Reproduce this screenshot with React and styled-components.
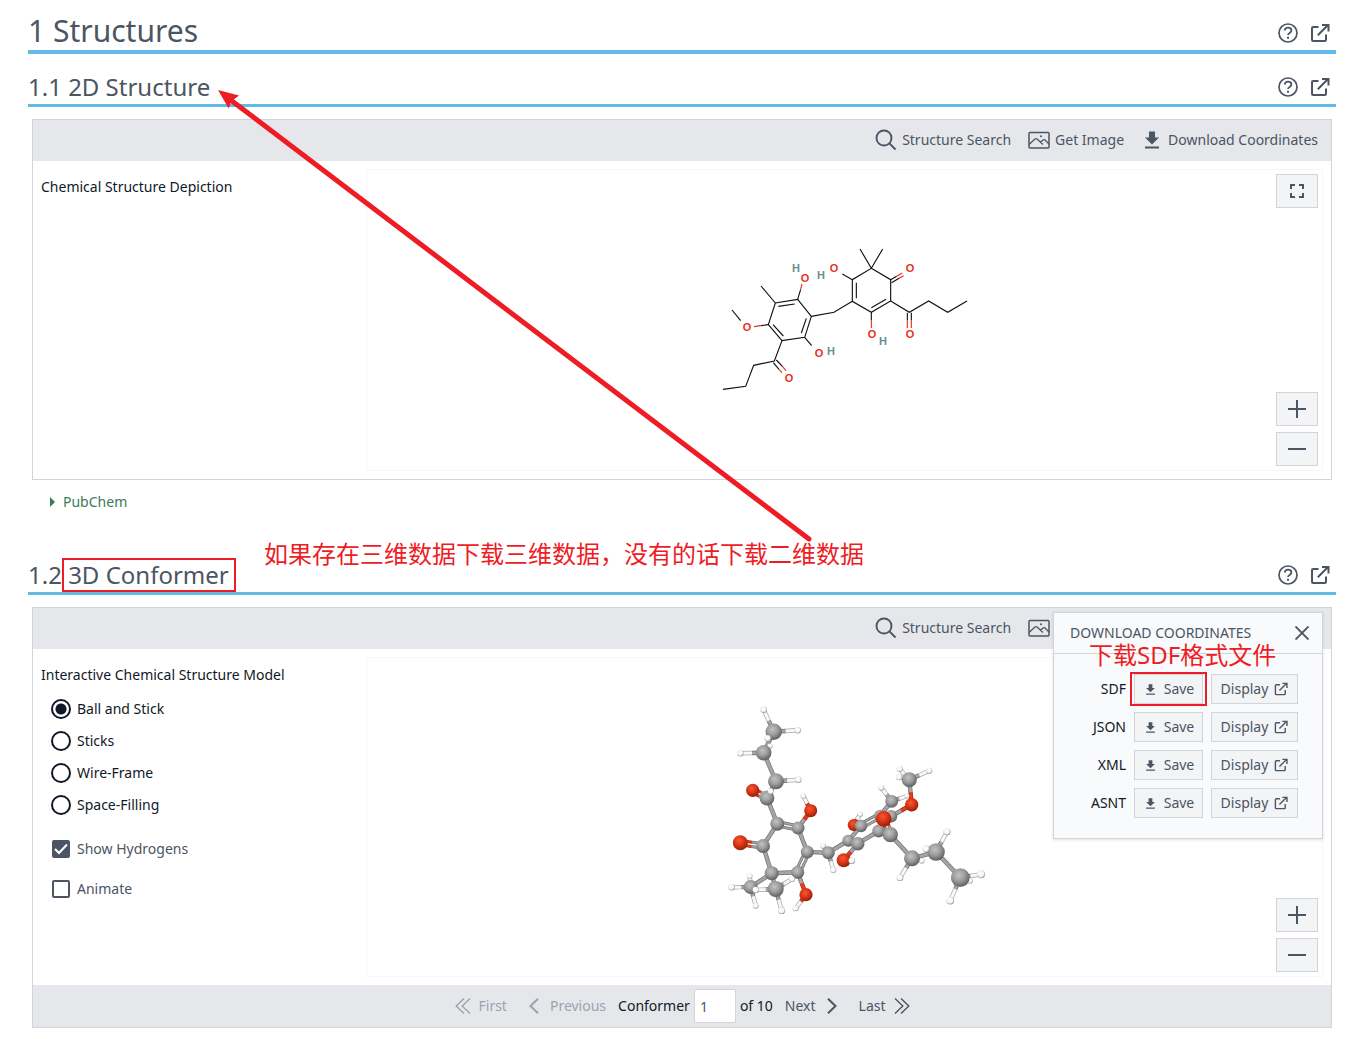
import React, { useState } from "react";
import styled, { createGlobalStyle } from "styled-components";

const color = {
  text: "#111827",
  muted: "#4b5563",
  faint: "#9ca3af",
  line: "#d1d5db",
  bar: "#e5e7eb",
  soft: "#f3f4f6",
  rule: "#62bae6",
  green: "#3b7a57",
  mark: "#ee1c25",
};

const GlobalStyle = createGlobalStyle`
  *, *::before, *::after { box-sizing: border-box; }
  body {
    margin: 0;
    background: #fff;
    color: ${color.text};
    font-family: "Noto Sans", "Open Sans", "Noto Sans CJK SC", sans-serif;
    font-size: 14px;
    line-height: 24px;
  }
  button, input { font: inherit; color: inherit; }
  svg { display: block; flex: none; }
`;

const Page = styled.main`
  position: relative;
  padding: 12px 15px 11px 28px;
`;

const Heading = styled.header`
  position: relative;
  display: flex;
  align-items: center;
  justify-content: space-between;
  margin-top: ${(p) => p.$gap || 0}px;
  padding-right: 6px;
  border-bottom: ${(p) => (p.$major ? 4 : 3)}px solid ${color.rule};
  color: ${color.muted};
`;

const Title = styled.h1`
  margin: 0;
  font-weight: 400;
  font-size: 30px;
  line-height: 38px;
`;

const Subtitle = styled.h2`
  margin: 0;
  padding-bottom: 2px;
  font-weight: 400;
  font-size: 24px;
  line-height: 30px;
`;

const Boxed = styled.span`
  position: relative;
  &::after {
    content: "";
    position: absolute;
    inset: ${(p) => p.$inset};
    border: 2px solid ${color.mark};
    pointer-events: none;
  }
`;

const HeadingTools = styled.div`
  display: flex;
  align-items: center;
  gap: 12px;
  padding-top: ${(p) => (p.$major ? 4 : 0)}px;
  padding-bottom: ${(p) => (p.$major ? 0 : 2)}px;
`;

const IconButton = styled.button`
  display: flex;
  padding: 0;
  border: 0;
  background: none;
  cursor: pointer;
`;

const IconLink = styled.a`
  display: flex;
  color: inherit;
`;

const Panel = styled.section`
  position: relative;
  margin: 12px 4px 0;
  border: 1px solid ${color.line};
`;

const Toolbar = styled.div`
  display: flex;
  justify-content: flex-end;
  align-items: center;
  gap: 16px;
  height: 41px;
  padding: 0 13px 1px 0;
  background: ${color.bar};
`;

const ToolButton = styled.button`
  display: flex;
  align-items: center;
  gap: 4px;
  padding: 0;
  border: 0;
  background: none;
  color: ${color.muted};
  cursor: pointer;
  svg { width: 24px; height: 24px; }
`;

const PanelBody = styled.div`
  display: grid;
  grid-template-columns: 1fr 3fr;
`;

const Side = styled.div`
  padding: 14px 8px;
`;

const SideTitle = styled.div`
  margin-bottom: 6px;
`;

const Options = styled.fieldset`
  margin: 0 0 ${(p) => p.$after || 0}px;
  padding: 0 0 0 10px;
  border: 0;
  display: flex;
  flex-direction: column;
  gap: ${(p) => p.$gap || 0}px;
`;

const Option = styled.label`
  display: flex;
  align-items: center;
  gap: 6px;
  height: 32px;
  color: ${(p) => (p.$muted ? color.muted : color.text)};
  cursor: pointer;
`;

const Radio = styled.input`
  appearance: none;
  width: 20px;
  height: 20px;
  margin: 0;
  border: 2px solid ${color.text};
  border-radius: 50%;
  &:checked {
    background: radial-gradient(circle, ${color.text} 5px, transparent 6px);
  }
`;

const CheckBox = styled.span`
  display: grid;
  place-items: center;
  width: 20px;
  height: 20px;
  > * { grid-area: 1 / 1; }
  svg { visibility: hidden; pointer-events: none; }
  input:checked + svg { visibility: visible; }
`;

const Check = styled.input`
  appearance: none;
  width: 18px;
  height: 18px;
  margin: 0;
  border: 2px solid ${color.muted};
  border-radius: 2px;
  &:checked { background: ${color.muted}; }
`;

const ViewerCell = styled.div`
  padding: 8px;
`;

const Viewer = styled.div`
  position: relative;
  display: flex;
  align-items: center;
  justify-content: center;
  height: ${(p) => p.$height}px;
  border: 1px solid #f7f7f9;
`;

const Controls = styled.div`
  position: absolute;
  inset: 4px 4px 4px auto;
  display: flex;
  flex-direction: column;
  gap: 6px;
`;

const Spacer = styled.span`
  flex: 1;
`;

const SquareButton = styled.button`
  display: flex;
  align-items: center;
  justify-content: center;
  width: 42px;
  height: 34px;
  padding: 0;
  border: 1px solid ${color.line};
  background: ${color.soft};
  color: ${color.muted};
  cursor: pointer;
`;

const Source = styled.a`
  display: inline-flex;
  align-items: center;
  gap: 8px;
  margin: 10px 0 0 22px;
  color: ${color.green};
  text-decoration: none;
`;

const Pager = styled.nav`
  display: flex;
  align-items: center;
  justify-content: center;
  height: 42px;
  background: ${color.bar};
`;

const PageButton = styled.button`
  display: flex;
  align-items: center;
  gap: ${(p) => p.$gap || 8}px;
  margin: 0 ${(p) => p.$right || 0}px 0 ${(p) => p.$left || 0}px;
  padding: 0;
  border: 0;
  background: none;
  color: ${color.muted};
  cursor: pointer;
  &:disabled { color: ${color.faint}; cursor: default; }
`;

const PageLabel = styled.label`
  display: flex;
  align-items: center;
  gap: 4px;
`;

const PageInput = styled.input`
  width: 42px;
  height: 34px;
  padding: 0 5px;
  border: 1px solid ${color.line};
  border-radius: 2px;
  background: #fff;
  color: ${color.muted};
`;

const Popup = styled.div`
  position: absolute;
  z-index: 1;
  top: 4px;
  right: 8px;
  width: 270px;
  border: 1px solid ${color.line};
  background: #f9fafb;
  box-shadow: 0 1px 3px rgba(0, 0, 0, 0.12);
`;

const PopupHead = styled.div`
  position: relative;
  display: flex;
  align-items: center;
  justify-content: space-between;
  height: 41px;
  padding: 0 13px 0 16px;
  border-bottom: 1px solid ${color.line};
  color: ${color.muted};
  line-height: 20px;
`;

const Formats = styled.div`
  display: grid;
  grid-template-columns: 1fr 69px 87px;
  gap: 8px;
  padding: 20px 24px;
  align-items: center;
`;

const FormatName = styled.span`
  text-align: right;
`;

const FormatButton = styled.button`
  display: flex;
  align-items: center;
  justify-content: center;
  gap: 6px;
  width: 100%;
  height: 30px;
  padding: 0;
  border: 1px solid ${color.line};
  background: ${color.soft};
  color: ${color.muted};
  cursor: pointer;
`;

const Note = styled.div`
  position: absolute;
  left: ${(p) => p.$left}px;
  top: ${(p) => p.$top}px;
  z-index: 2;
  color: ${color.mark};
  font-family: "Noto Sans", "Noto Sans CJK SC", sans-serif;
  font-size: 24px;
  line-height: 24px;
  white-space: nowrap;
`;

const ArrowLayer = styled.svg`
  position: absolute;
  left: 216px;
  top: 88px;
  z-index: 3;
  pointer-events: none;
`;

const HelpIcon = () => (
  <svg width="20" height="20" viewBox="0 0 20 20" fill="none" stroke="currentColor" strokeWidth="1.7">
    <circle cx="10" cy="10" r="9" />
    <path d="M6.7 7.6C6.7 5.7 8.1 4.7 10 4.7s3.4 1.1 3.4 2.8c0 2.5-3.4 2.4-3.4 4.6" strokeWidth="1.8" />
    <path d="M10 13.7v2" strokeWidth="2" />
  </svg>
);

const OpenIcon = ({ size = 20, weight = 2 }) => (
  <svg width={size} height={size} viewBox="0 0 20 20" fill="none" stroke="currentColor" strokeWidth={weight}>
    <path d="M8.500 4H3.200Q2 4 2 5.200v11.600Q2 18 3.200 18h11.600q1.200 0 1.200-1.200V11.500" />
    <path d="M7.800 12.200L17.500 2.500M12 2h6.500v6.500" />
  </svg>
);

const SearchIcon = () => (
  <svg viewBox="0 0 24 24" fill="none" stroke="currentColor" strokeWidth="1.9">
    <circle cx="10" cy="10" r="7.500" />
    <path d="M15.200 15.200L21.500 21.500" />
  </svg>
);

const ImageIcon = () => (
  <svg viewBox="0 0 24 24" fill="none" stroke="currentColor" strokeWidth="1.5">
    <rect x="2" y="4.500" width="20" height="15.500" rx="1" />
    <path d="M2 16.500L8 11q1-.8 2 0l6 5.500M13.500 14.500l2.500-2.500q1-.8 2 0l4 4" strokeWidth="1.3" />
    <circle cx="14" cy="8.300" r="1" fill="currentColor" stroke="none" />
  </svg>
);

const DownloadIcon = ({ size = 24 }) => (
  <svg width={size} height={size} viewBox="0 0 24 24" fill="currentColor">
    <path d="M9 3.500h6v6h4l-7 7-7-7h4zM5 18.500h14v2H5z" />
  </svg>
);

const ExpandIcon = () => (
  <svg width="14" height="14" viewBox="0 0 14 14" fill="none" stroke="currentColor" strokeWidth="2">
    <path d="M1 5V1h4M9 1h4v4M13 9v4H9M5 13H1V9" />
  </svg>
);

const PlusIcon = () => (
  <svg width="18" height="18" viewBox="0 0 18 18" stroke="currentColor" strokeWidth="2">
    <path d="M0 9h18M9 0v18" />
  </svg>
);

const MinusIcon = () => (
  <svg width="18" height="18" viewBox="0 0 18 18" stroke="currentColor" strokeWidth="2">
    <path d="M0 9h18" />
  </svg>
);

const CloseIcon = () => (
  <svg width="14" height="14" viewBox="0 0 14 14" stroke="currentColor" strokeWidth="1.9">
    <path d="M.5.5l13 13M13.500.5l-13 13" />
  </svg>
);

const Chevron = ({ twice, flip }) => (
  <svg
    width={twice ? 16 : 10}
    height="16"
    viewBox={twice ? "0 0 16 16" : "0 0 10 16"}
    fill="none"
    stroke="currentColor"
    strokeWidth={twice ? 1.4 : 2}
  >
    <g transform={flip ? `translate(${twice ? 16 : 10} 0) scale(-1 1)` : undefined}>
      {twice ? <path d="M9 .5L1.200 8 9 15.500M15 .5L7.200 8l7.800 7.500" /> : <path d="M9 .7L1.500 8 9 15.300" />}
    </g>
  </svg>
);

const SquareAction = ({ label, children }) => (
  <SquareButton type="button" aria-label={label}>
    {children}
  </SquareButton>
);

const labels2d = [
  ["O", 834, 268], ["H", 821, 275], ["H", 796, 268], ["O", 805, 278],
  ["O", 747, 327], ["O", 819, 353], ["H", 831, 351], ["O", 789, 378],
  ["O", 910, 268], ["O", 872, 334], ["H", 883, 341], ["O", 910, 334],
];

const Depiction = () => (
  <svg width="300" height="300" viewBox="694 170 300 300" role="img" aria-label="2D structure">
    <g transform="translate(710 230) scale(.33333)" fill="none" stroke="#111" strokeWidth="3.4">
      <path d="M484 115L542 149V213L484 247L427 214V149ZM484 115L450 57M484 115L518 57M427 149L397 132" />
      <path d="M439 158V205M528 208L484 233M542 149L560 139M545 158L567 145M542 213L598 247L656 213L713 247L771 213" />
      <path d="M484 247V270M592 248V270M604 248V270M427 214L372 247L304 259" />
      <path d="M304 259L284 322L216 332L175 284L196 219L263 208ZM289 265L274 309M220 318L189 284M205 229L254 222" />
      <path d="M263 208L272 178M196 219L153 168M175 284L152 287M92 272L66 240M284 322L305 347M216 332L193 393L131 406L107 469L39 478" />
      <path d="M190 398L207 418M199 390L218 410" />
      <g stroke="#e8331c">
        <path d="M560 139L577 129M567 145L581 137M592 270V294M604 270V294M484 270V294" />
        <path d="M272 178L276 162M152 287L132 290M207 418L216 428M218 410L228 422" />
      </g>
    </g>
    <g fontFamily="Liberation Sans, Arial, sans-serif" fontSize="11" fontWeight="700" textAnchor="middle">
      {labels2d.map(([el, x, y]) => (
        <text key={`${x}-${y}`} x={x} y={y + 4} fill={el === "O" ? "#e8331c" : "#6a8f8f"}>
          {el}
        </text>
      ))}
    </g>
  </svg>
);

/* id: [element, x, y, radius] — painted in this order, back to front */
const atoms = {
  h30: ["H", 823, 845.7, 2.8], h31: ["H", 749.7, 876, 2.8], h32: ["H", 921.7, 860.7, 2.8],
  h33: ["H", 970, 880.700, 2.800], h34: ["H", 770, 746, 2.500], h35: ["H", 907, 796, 2.500],
  h1: ["H", 763.7, 709.7, 3.2], h2: ["H", 797.7, 730.3, 3.2], h4: ["H", 740.3, 753.3, 3.2], h5: ["H", 798.3, 779.7, 3.2],
  ho5: ["H", 803.3, 796, 2.8], c1: ["C", 773.7, 731.7, 8.2], c2: ["C", 763.7, 752.7, 7.8], h3: ["H", 767.7, 738.3, 3.2],
  c3: ["C", 776, 781.3, 8], o4: ["O", 752.7, 790.3, 6.6], c4: ["C", 767, 798, 7.4], h6: ["H", 770.7, 791.3, 3],
  o5: ["O", 810.7, 810.7, 6.5], c6: ["C", 777.3, 823.7, 7], c7: ["C", 798, 828, 6.5], c8: ["C", 807.3, 852, 6.5],
  c9: ["C", 797.7, 872.3, 6.5], c11: ["C", 763, 846, 7], o11: ["O", 740.3, 842.7, 7.5], c10: ["C", 771.7, 873.3, 7],
  c12: ["C", 750.7, 887, 7], h7: ["H", 731.7, 887.3, 3.2], h8: ["H", 755.7, 905.7, 3], c13: ["C", 775.7, 889, 8],
  h9: ["H", 755.7, 890, 3.2], h10: ["H", 792, 879, 3], h11: ["H", 781.7, 910.7, 3.4], o9: ["O", 806, 894.7, 6.6],
  ho9: ["H", 795.7, 908.3, 3], c14: ["C", 828.3, 852.7, 6.5], h12: ["H", 833.3, 870, 3],
  ho16: ["H", 860.3, 814, 2.6], o16: ["O", 853.7, 825, 6], c15: ["C", 848.3, 840.7, 6], c16: ["C", 861, 826, 6.2],
  c22: ["C", 891.7, 801.3, 6.4], h13: ["H", 881.3, 787.7, 2.8], c18: ["C", 880, 815.7, 6], c19: ["C", 891, 816.3, 6.2],
  c20: ["C", 878.7, 831, 6.4], c17: ["C", 857.7, 843.7, 6.8], o17: ["O", 843.7, 860.3, 7], ho17: ["H", 851.7, 860.7, 3.2],
  h14: ["H", 899.7, 769, 3], c23: ["C", 909.3, 779.7, 7.5], h15: ["H", 899, 777.3, 3], h16: ["H", 929.3, 770.7, 3],
  o23: ["O", 911.7, 804.7, 6.7], c21: ["C", 890.3, 834.7, 7.6], o21: ["O", 883.7, 818.7, 7.8],
  c24: ["C", 912, 858.3, 8], h17: ["H", 900, 877.7, 3.4], c25: ["C", 936, 852, 8.8], h18: ["H", 926, 849, 3.4],
  h19: ["H", 947, 831.7, 3.5], c26: ["C", 960.3, 877.7, 9.4], h20: ["H", 981, 874.3, 4], h21: ["H", 950.3, 900.7, 3.8],
};

const bonds = `c1-h1 c1-h2 c1-c2 c2-h4 c2-h34 c2-c3 c3-h5 c3-c4 c4=o4 c4-c6 c6=c7 c7-o5 o5-ho5 c7-c8 c8=c9 c9-c10 c10-c11
c11=o11 c11-c6 c10-c12 c10-c13 c12-h7 c12-h8 c12-h31 c13-h9 c13-h10 c13-h11 c9-o9 o9-ho9 c8-c14 c14-h30 c14-h12 c14-c15
c15-c16 c16-o16 o16-ho16 c16=c18 c18-c19 c18-c22 c19-o23 c22-h13 c22-h35 c15=c17 c17-o17 o17-ho17 c17-c20 c20-c21 c20-c19
o23-c23 c23-h14 c23-h15 c23-h16 c21=o21 c21-c24 c24-h17 c24-h32 c24-c25 c25-h18 c25-h19 c25-c26 c26-h20 c26-h21 c26-h33`
  .split(/\s+/)
  .map((pair) => {
    const [a, b] = pair.split(/[-=]/);
    return { a: atoms[a], b: atoms[b], double: pair.includes("="), key: pair };
  });

const tone = {
  C: { edge: "#6e6e6e", fill: "#a6a6a6" },
  O: { edge: "#a82812", fill: "#e23d1d" },
  H: { edge: "#a8a8a8", fill: "#f8f8f8" },
};

const Stick = ({ bond, shift, width }) => {
  const [elA, xa, ya] = bond.a;
  const [elB, xb, yb] = bond.b;
  const len = Math.hypot(xb - xa, yb - ya) || 1;
  const dx = (-(yb - ya) / len) * shift;
  const dy = ((xb - xa) / len) * shift;
  const mx = (xa + xb) / 2 + dx;
  const my = (ya + yb) / 2 + dy;
  return [
    [elA, xa + dx, ya + dy],
    [elB, xb + dx, yb + dy],
  ].map(([el, x, y], i) => (
    <g key={i}>
      <line x1={x} y1={y} x2={mx} y2={my} stroke={tone[el].edge} strokeWidth={width} />
      <line x1={x} y1={y} x2={mx} y2={my} stroke={tone[el].fill} strokeWidth={width - 1.4} />
    </g>
  ));
};

const Model = () => (
  <svg width="300" height="300" viewBox="694 667 300 300" role="img" aria-label="3D conformer">
    <defs>
      <radialGradient id="ball-C" cx=".42" cy=".36" r=".66">
        <stop offset="0" stopColor="#c2c2c2" />
        <stop offset=".5" stopColor="#9c9c9c" />
        <stop offset="1" stopColor="#5c5c5c" />
      </radialGradient>
      <radialGradient id="ball-O" cx=".42" cy=".36" r=".66">
        <stop offset="0" stopColor="#f35a36" />
        <stop offset=".5" stopColor="#dc3515" />
        <stop offset="1" stopColor="#8f1f0a" />
      </radialGradient>
      <radialGradient id="ball-H" cx=".45" cy=".42" r=".62">
        <stop offset="0" stopColor="#fff" />
        <stop offset=".6" stopColor="#f4f4f4" />
        <stop offset="1" stopColor="#808080" />
      </radialGradient>
    </defs>
    {bonds.map((bond) =>
      bond.double ? (
        <g key={bond.key}>
          <Stick bond={bond} shift={-2.2} width={3} />
          <Stick bond={bond} shift={2.2} width={3} />
        </g>
      ) : (
        <Stick key={bond.key} bond={bond} shift={0} width={4.4} />
      )
    )}
    {Object.entries(atoms).map(([id, [el, x, y, r]]) => (
      <circle key={id} cx={x} cy={y} r={r} fill={`url(#ball-${el})`} />
    ))}
  </svg>
);

const HeadingActions = ({ major }) => (
  <HeadingTools $major={major}>
    <IconButton type="button" aria-label="Help">
      <HelpIcon />
    </IconButton>
    <IconLink href="#section" aria-label="Open in new window">
      <OpenIcon />
    </IconLink>
  </HeadingTools>
);

const StructureTools = () => (
  <Toolbar>
    <ToolButton type="button"><SearchIcon />Structure Search</ToolButton>
    <ToolButton type="button"><ImageIcon />Get Image</ToolButton>
    <ToolButton type="button"><DownloadIcon />Download Coordinates</ToolButton>
  </Toolbar>
);

const SaveButton = () => (
  <FormatButton type="button"><DownloadIcon size={15} />Save</FormatButton>
);

const styles3d = ["Ball and Stick", "Sticks", "Wire-Frame", "Space-Filling"];

export default function App() {
  const [mode, setMode] = useState(styles3d[0]);
  const [hydrogens, setHydrogens] = useState(true);
  const [animate, setAnimate] = useState(false);
  const [page, setPage] = useState("1");

  return (
    <Page>
      <GlobalStyle />
      <Heading $major>
        <Title>1 Structures</Title>
        <HeadingActions major />
      </Heading>

      <Heading $gap={18}>
        <Subtitle>1.1 2D Structure</Subtitle>
        <HeadingActions />
      </Heading>
      <Panel>
        <StructureTools />
        <PanelBody>
          <Side><SideTitle>Chemical Structure Depiction</SideTitle></Side>
          <ViewerCell>
            <Viewer $height={302}>
              <Depiction />
              <Controls>
                <SquareAction label="Full screen"><ExpandIcon /></SquareAction>
                <Spacer />
                <SquareAction label="Zoom in"><PlusIcon /></SquareAction>
                <SquareAction label="Zoom out"><MinusIcon /></SquareAction>
              </Controls>
            </Viewer>
          </ViewerCell>
        </PanelBody>
      </Panel>
      <Source href="#pubchem">
        <svg width="5" height="10" viewBox="0 0 5 10" fill="currentColor"><path d="M0 0l5 5-5 5z" /></svg>
        PubChem
      </Source>

      <Heading $gap={46}>
        <Subtitle>1.2 <Boxed $inset="0 -7px -1px -6px">3D Conformer</Boxed></Subtitle>
        <Note $left={236} $top={-18}>如果存在三维数据下载三维数据，没有的话下载二维数据</Note>
        <HeadingActions />
      </Heading>
      <Panel>
        <StructureTools />
        <PanelBody>
          <Side>
            <SideTitle>Interactive Chemical Structure Model</SideTitle>
            <Options $after={12} aria-label="Model style">
              {styles3d.map((name) => (
                <Option key={name}>
                  <Radio type="radio" name="model-style" checked={mode === name} onChange={() => setMode(name)} />
                  {name}
                </Option>
              ))}
            </Options>
            <Options $gap={8} aria-label="Display options">
              {[["Show Hydrogens", hydrogens, setHydrogens], ["Animate", animate, setAnimate]].map(([name, on, set]) => (
                <Option key={name} $muted>
                  <CheckBox>
                    <Check type="checkbox" checked={on} onChange={(e) => set(e.target.checked)} />
                    <svg width="14" height="12" viewBox="0 0 14 12" fill="none" stroke="#fff" strokeWidth="2">
                      <path d="M1 6l4 4 8-8.500" />
                    </svg>
                  </CheckBox>
                  {name}
                </Option>
              ))}
            </Options>
          </Side>
          <ViewerCell>
            <Viewer $height={320}>
              <Model />
              <Controls>
                <Spacer />
                <SquareAction label="Zoom in"><PlusIcon /></SquareAction>
                <SquareAction label="Zoom out"><MinusIcon /></SquareAction>
              </Controls>
            </Viewer>
          </ViewerCell>
        </PanelBody>
        <Pager aria-label="Conformers">
          <PageButton type="button" disabled $right={22}><Chevron twice />First</PageButton>
          <PageButton type="button" disabled $gap={11} $right={12}><Chevron />Previous</PageButton>
          <PageLabel>
            Conformer
            <PageInput value={page} onChange={(e) => setPage(e.target.value)} />
            of 10
          </PageLabel>
          <PageButton type="button" $gap={11} $left={12} $right={22}>Next<Chevron flip /></PageButton>
          <PageButton type="button">Last<Chevron twice flip /></PageButton>
        </Pager>

        <Popup role="dialog" aria-label="Download coordinates">
          <PopupHead>
            DOWNLOAD COORDINATES
            <IconButton type="button" aria-label="Close"><CloseIcon /></IconButton>
            <Note $left={35} $top={30}>下载SDF格式文件</Note>
          </PopupHead>
          <Formats>
            {["SDF", "JSON", "XML", "ASNT"].map((name) => (
              <React.Fragment key={name}>
                <FormatName>{name}</FormatName>
                {name === "SDF" ? <Boxed $inset="-2px -4px"><SaveButton /></Boxed> : <SaveButton />}
                <FormatButton type="button">Display<OpenIcon size={14} /></FormatButton>
              </React.Fragment>
            ))}
          </Formats>
        </Popup>
      </Panel>

      <ArrowLayer width="600" height="456" viewBox="216 88 600 456" aria-hidden="true">
        <path d="M230 99.500L809 539" stroke={color.mark} strokeWidth="5" strokeLinecap="round" />
        <path d="M218 90L239 95.500L233 100L231 102L228.700 108.500Z" fill={color.mark} />
      </ArrowLayer>
    </Page>
  );
}
